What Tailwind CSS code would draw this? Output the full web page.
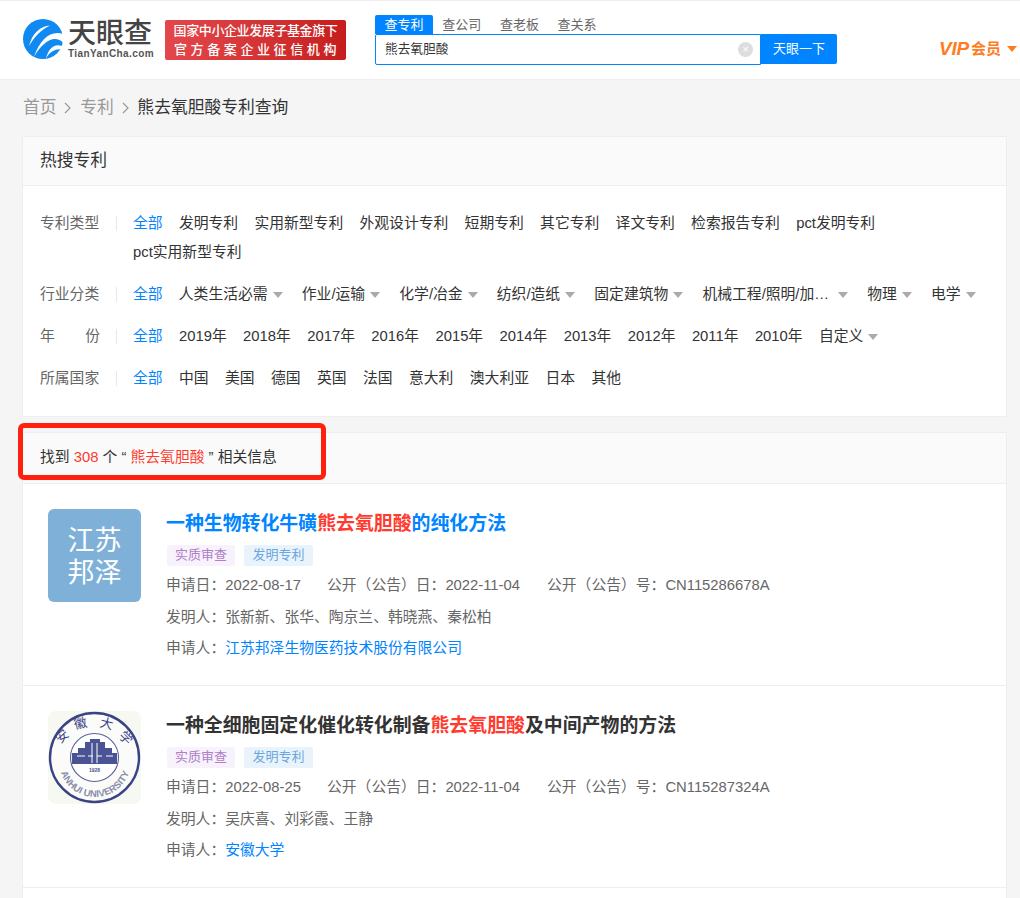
<!DOCTYPE html>
<html lang="en">
<head>
  <meta charset="utf-8" />
  <title>熊去氧胆酸专利查询</title>
  <script src="https://cdn.jsdelivr.net/npm/@tailwindcss/browser@4"></script>
</head>
<body class="bg-[#f5f5f5] text-[#333] font-['Liberation_Sans','Noto_Sans_CJK_SC',sans-serif] text-[14.8px] w-[1020px] h-[898px] overflow-hidden relative">

<!-- Header -->
<header class="h-[80px] bg-white border-t border-b border-[#eee] flex items-start pl-[23px]">
  <div class="flex items-center mt-[18px] w-[142px]">
    <svg class="w-[40px] h-[40px] shrink-0" viewBox="0 0 40 40">
      <circle cx="20" cy="20" r="20" fill="#1089f0"/>
      <path d="M27 6.5C17 7 9 15 6 27C11 18 18 11 27 6.5Z" fill="#fff"/>
      <path d="M40 15C28 11 17 20 11 38C17 27 25 20 32 20C35 20 38 21 40 24Z" fill="#fff"/>
      <path d="M39 27C31 24 25 30 23 40C26 33 31 30 40 30Z" fill="#fff"/>
    </svg>
    <div class="ml-[5px] flex flex-col">
      <span class="text-[28px] leading-[28px] font-medium text-[#444] w-[86px] whitespace-nowrap">天眼查</span>
      <span class="text-[10px] leading-[10px] mt-[1px] font-bold text-[#555] tracking-[0.4px] whitespace-nowrap">TianYanCha.com</span>
    </div>
  </div>
  <div class="mt-[19px] w-[181px] h-[40px] rounded-[2px] bg-gradient-to-r from-[#e4474b] to-[#c61d1d] text-white text-[13px] leading-[19px] pt-[1px] text-center font-medium">
    <div class="whitespace-nowrap tracking-[-0.4px]">国家中小企业发展子基金旗下</div>
    <div class="whitespace-nowrap tracking-[3.6px] pl-[3px]">官方备案企业征信机构</div>
  </div>
  <div class="ml-[29px] mt-[14px] w-[462px]">
    <div class="flex h-[19px] text-[13px] leading-[19px] text-[#666]">
      <span class="w-[58px] bg-[#0084ff] text-white text-center rounded-t-[2px] whitespace-nowrap">查专利</span>
      <span class="w-[57.6px] text-center">查公司</span>
      <span class="w-[57.6px] text-center">查老板</span>
      <span class="w-[57.6px] text-center">查关系</span>
    </div>
    <div class="flex h-[31px]">
      <div class="w-[386px] border border-[#0084ff] rounded-l-[2px] flex items-center justify-between pl-[9px] pr-[7px] text-[12.7px] text-[#333]">
        <span>熊去氧胆酸</span>
        <span class="w-[15px] h-[15px] rounded-full bg-[#ddd] text-white text-[11px] leading-[14px] text-center">×</span>
      </div>
      <div class="w-[76px] h-[30px] bg-[#0084ff] text-white text-[13px] leading-[30px] text-center rounded-r-[2px]">天眼一下</div>
    </div>
  </div>
  <div class="ml-[102px] mt-[36px] flex items-center text-[#ff7d1f] font-bold leading-[24px] whitespace-nowrap">
    <span class="italic font-black text-[19px] tracking-[-0.2px] w-[32px]">VIP</span><span class="text-[15px]">会员</span>
    <span class="ml-[6px] w-0 h-0 border-x-[5px] border-x-transparent border-t-[6px] border-t-[#ff7d1f]"></span>
  </div>
</header>

<main class="px-[22px]">
  <!-- Breadcrumb -->
  <nav class="h-[56px] flex items-center pl-[1px] text-[16.8px] text-[#999] whitespace-nowrap">
    <span>首页</span>
    <svg class="w-[8px] h-[12px] mx-[7.8px]" viewBox="0 0 8 12" fill="none" stroke="#999" stroke-width="1.2"><path d="M1 1l5 5-5 5"/></svg>
    <span>专利</span>
    <svg class="w-[8px] h-[12px] mx-[7.8px]" viewBox="0 0 8 12" fill="none" stroke="#999" stroke-width="1.2"><path d="M1 1l5 5-5 5"/></svg>
    <span class="text-[#333]">熊去氧胆酸专利查询</span>
  </nav>

  <!-- Filters -->
  <section class="bg-white border border-[#eee] h-[281px] w-[985px]">
    <div class="h-[49px] bg-[#fafafa] border-b border-[#eee] pl-[17px] text-[16.8px] leading-[47px]">热搜专利</div>
    <div class="pl-[17px] pt-[23px] flex flex-col gap-[13px]">
      <div class="flex leading-[29px]">
        <div class="w-[60px] text-[#666] shrink-0">专利类型</div>
        <div class="w-px h-[15px] bg-[#e8e8e8] ml-[16px] mt-[7px] shrink-0"></div>
        <div class="ml-[16px] flex flex-wrap gap-x-[16.3px] w-[800px]">
          <span class="text-[#0084ff]">全部</span><span>发明专利</span><span>实用新型专利</span><span>外观设计专利</span><span>短期专利</span><span>其它专利</span><span>译文专利</span><span>检索报告专利</span><span>pct发明专利</span><span>pct实用新型专利</span>
        </div>
      </div>
      <div class="flex leading-[29px]">
        <div class="w-[60px] text-[#666] shrink-0">行业分类</div>
        <div class="w-px h-[15px] bg-[#e8e8e8] ml-[16px] mt-[7px] shrink-0"></div>
        <div class="ml-[16px] flex gap-x-[19.2px] whitespace-nowrap">
          <span class="text-[#0084ff] mr-[-3px]">全部</span>
          <span class="flex items-center">人类生活必需<i class="ml-[5px] w-0 h-0 border-x-[5px] border-x-transparent border-t-[6px] border-t-[#aaa]"></i></span>
          <span class="flex items-center">作业/运输<i class="ml-[5px] w-0 h-0 border-x-[5px] border-x-transparent border-t-[6px] border-t-[#aaa]"></i></span>
          <span class="flex items-center">化学/冶金<i class="ml-[5px] w-0 h-0 border-x-[5px] border-x-transparent border-t-[6px] border-t-[#aaa]"></i></span>
          <span class="flex items-center">纺织/造纸<i class="ml-[5px] w-0 h-0 border-x-[5px] border-x-transparent border-t-[6px] border-t-[#aaa]"></i></span>
          <span class="flex items-center">固定建筑物<i class="ml-[5px] w-0 h-0 border-x-[5px] border-x-transparent border-t-[6px] border-t-[#aaa]"></i></span>
          <span class="flex items-center">机械工程/照明/加…<i class="ml-[9px] w-0 h-0 border-x-[5px] border-x-transparent border-t-[6px] border-t-[#aaa]"></i></span>
          <span class="flex items-center">物理<i class="ml-[5px] w-0 h-0 border-x-[5px] border-x-transparent border-t-[6px] border-t-[#aaa]"></i></span>
          <span class="flex items-center">电学<i class="ml-[5px] w-0 h-0 border-x-[5px] border-x-transparent border-t-[6px] border-t-[#aaa]"></i></span>
        </div>
      </div>
      <div class="flex leading-[29px]">
        <div class="w-[60px] text-[#666] shrink-0 flex justify-between"><span>年</span><span>份</span></div>
        <div class="w-px h-[15px] bg-[#e8e8e8] ml-[16px] mt-[7px] shrink-0"></div>
        <div class="ml-[16px] flex gap-x-[16.4px] whitespace-nowrap">
          <span class="text-[#0084ff]">全部</span><span>2019年</span><span>2018年</span><span>2017年</span><span>2016年</span><span>2015年</span><span>2014年</span><span>2013年</span><span>2012年</span><span>2011年</span><span>2010年</span>
          <span class="flex items-center">自定义<i class="ml-[5px] w-0 h-0 border-x-[5px] border-x-transparent border-t-[6px] border-t-[#aaa]"></i></span>
        </div>
      </div>
      <div class="flex leading-[29px]">
        <div class="w-[60px] text-[#666] shrink-0">所属国家</div>
        <div class="w-px h-[15px] bg-[#e8e8e8] ml-[16px] mt-[7px] shrink-0"></div>
        <div class="ml-[16px] flex gap-x-[16.4px] whitespace-nowrap">
          <span class="text-[#0084ff]">全部</span><span>中国</span><span>美国</span><span>德国</span><span>英国</span><span>法国</span><span>意大利</span><span>澳大利亚</span><span>日本</span><span>其他</span>
        </div>
      </div>
    </div>
  </section>

  <!-- Results -->
  <section class="mt-[15px] bg-white border-x border-t border-[#eee] w-[985px] h-[480px]">
    <div class="h-[51px] bg-[#fafafa] border-b border-[#eee] pl-[17px] pt-[14px] leading-[21px]">
      找到 <span class="text-[#ff3b30]">308</span> 个 “ <span class="text-[#ff3b30]">熊去氧胆酸</span> ” 相关信息
    </div>

    <article class="h-[202px] border-b border-[#eee] flex pl-[25px] pt-[25px]">
      <div class="w-[93px] h-[93px] rounded-[6px] bg-[#7fb1d8] text-white text-[27px] leading-[32px] text-center pt-[16px] shrink-0">江苏<br>邦泽</div>
      <div class="ml-[25px]">
        <h3 class="text-[18.9px] leading-[28px] pt-[1px] font-bold text-[#0084ff]">一种生物转化牛磺<span class="text-[#ff3b30]">熊去氧胆酸</span>的纯化方法</h3>
        <div class="mt-[7px] flex gap-[9px] text-[13px] leading-[19px] pl-[1px]">
          <span class="h-[21px] px-[8px] bg-[#f7f2fb] text-[#b07fc8] rounded-[2px]">实质审查</span>
          <span class="h-[21px] px-[8.5px] bg-[#e9f3fc] text-[#6aa6e0] rounded-[2px]">发明专利</span>
        </div>
        <div class="mt-[9px] text-[#666] leading-[21px] flex whitespace-nowrap">
          <span class="w-[161px]">申请日&#xFF1A;2022-08-17</span><span class="w-[220px]">公开&#xFF08;公告&#xFF09;日&#xFF1A;2022-11-04</span><span>公开&#xFF08;公告&#xFF09;号&#xFF1A;CN115286678A</span>
        </div>
        <div class="mt-[11px] text-[#666] leading-[21px]">发明人&#xFF1A;张新新、张华、陶京兰、韩晓燕、秦松柏</div>
        <div class="mt-[10px] text-[#666] leading-[21px]">申请人&#xFF1A;<span class="text-[#0084ff]">江苏邦泽生物医药技术股份有限公司</span></div>
      </div>
    </article>

    <article class="h-[202px] border-b border-[#eee] flex pl-[25px] pt-[25px]">
      <div class="w-[93px] h-[93px] rounded-[8px] bg-[#f6f8f2] shrink-0">
        <svg viewBox="0 0 93 93" class="w-full h-full">
          <defs><path id="arc" d="M11 50A36 36 0 0 0 83 50"/></defs>
          <circle cx="46.5" cy="46.5" r="44.5" fill="#fbfcfa" stroke="#3b4285" stroke-width="2.4"/>
          <circle cx="46.5" cy="46.5" r="24" fill="#fff" stroke="#5a6199" stroke-width="1.1"/>
          <path d="M24 53V42H30V37H37V31H42V28H52V31H57V37H64V42H69V53Z" fill="#4a5494"/>
          <path d="M29 45h8M40 45h5M49 45h5M58 45h7M44 32v20M49 32v20" stroke="#fff" stroke-width="1"/>
          <text x="46.5" y="61" text-anchor="middle" font-size="5" font-weight="700" fill="#4a5290">1928</text>
          <text font-size="9.5" fill="#8a8ea8" font-weight="700"><textPath href="#arc" startOffset="50%" text-anchor="middle">ANHUI UNIVERSITY</textPath></text>
          <text x="8" y="30" font-size="13" fill="#3b4285" transform="rotate(-42 14 26)">安</text>
          <text x="26" y="17" font-size="13" fill="#3b4285" transform="rotate(-12 32 13)">徽</text>
          <text x="52" y="17" font-size="13" fill="#3b4285" transform="rotate(14 58 13)">大</text>
          <text x="71" y="31" font-size="13" fill="#3b4285" transform="rotate(45 77 27)">学</text>
        </svg>
      </div>
      <div class="ml-[25px]">
        <h3 class="text-[18.9px] leading-[28px] pt-[1px] font-bold text-[#333]">一种全细胞固定化催化转化制备<span class="text-[#ff3b30]">熊去氧胆酸</span>及中间产物的方法</h3>
        <div class="mt-[7px] flex gap-[9px] text-[13px] leading-[19px] pl-[1px]">
          <span class="h-[21px] px-[8px] bg-[#f7f2fb] text-[#b07fc8] rounded-[2px]">实质审查</span>
          <span class="h-[21px] px-[8.5px] bg-[#e9f3fc] text-[#6aa6e0] rounded-[2px]">发明专利</span>
        </div>
        <div class="mt-[9px] text-[#666] leading-[21px] flex whitespace-nowrap">
          <span class="w-[161px]">申请日&#xFF1A;2022-08-25</span><span class="w-[220px]">公开&#xFF08;公告&#xFF09;日&#xFF1A;2022-11-04</span><span>公开&#xFF08;公告&#xFF09;号&#xFF1A;CN115287324A</span>
        </div>
        <div class="mt-[11px] text-[#666] leading-[21px]">发明人&#xFF1A;吴庆喜、刘彩霞、王静</div>
        <div class="mt-[10px] text-[#666] leading-[21px]">申请人&#xFF1A;<span class="text-[#0084ff]">安徽大学</span></div>
      </div>
    </article>
  </section>
</main>

<!-- Red annotation box over the result count -->
<div class="absolute left-[18px] top-[423px] w-[308px] h-[57px] border-[5px] border-[#ff2010] rounded-[6px]"></div>
</body>
</html>
